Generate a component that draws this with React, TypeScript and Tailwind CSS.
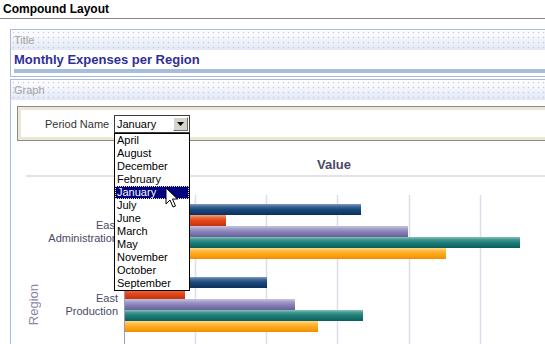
import React from "react";

const months = ["April","August","December","February","January","July","June","March","May","November","October","September"];

const bandCls =
  "h-[20px] flex items-center pl-[3px] text-[11px] text-[#a3a3a3] bg-[radial-gradient(circle,#c6cde3_0.6px,transparent_1.1px),linear-gradient(to_bottom,#ffffff,#e3e8f6)] [background-size:5px_5px,100%_100%]";

type Bar = { end: number; grad: string };
const groups: { y: number; bars: Bar[] }[] = [
  { y: 9, bars: [
    { end: 237, grad: "gNavy" },
    { end: 102, grad: "gRed" },
    { end: 284, grad: "gPurple" },
    { end: 396, grad: "gTeal" },
    { end: 322, grad: "gOrange" },
  ]},
  { y: 82, bars: [
    { end: 143, grad: "gNavy" },
    { end: 61, grad: "gRed" },
    { end: 171, grad: "gPurple" },
    { end: 239, grad: "gTeal" },
    { end: 194, grad: "gOrange" },
  ]},
];

const grads: Record<string, string[]> = {
  gNavy: ["#7f9cc0", "#3a6494", "#1b497b", "#123d6c", "#0c2f5a"],
  gRed: ["#f7a07e", "#ec6a3e", "#e2481a", "#d63e10", "#bf340a"],
  gPurple: ["#c8c4e2", "#a39ecb", "#8a84ba", "#7872aa", "#665f98"],
  gTeal: ["#86c2ba", "#3f958e", "#1f7f79", "#146f6a", "#0b5e5a"],
  gOrange: ["#ffdb8e", "#ffbd45", "#ffa920", "#f99d10", "#ec9000"],
};

function Plot() {
  const gx = [71.5, 142.5, 213.5, 285.5, 356.5, 427.5];
  return (
    <svg width="480" height="219" className="block">
      <defs>
        {Object.entries(grads).map(([id, c]) => (
          <linearGradient key={id} id={id} x1="0" y1="0" x2="0" y2="1">
            <stop offset="0" stopColor={c[0]} />
            <stop offset="0.25" stopColor={c[1]} />
            <stop offset="0.5" stopColor={c[2]} />
            <stop offset="0.75" stopColor={c[3]} />
            <stop offset="1" stopColor={c[4]} />
          </linearGradient>
        ))}
      </defs>
      {gx.map((x) => (
        <line key={x} x1={x} y1={0} x2={x} y2={219} stroke="#dcdcea" strokeWidth={1.5} />
      ))}
      <line x1={0.5} y1={0} x2={0.5} y2={219} stroke="#9a9abb" strokeWidth={1} />
      {groups.map((g, gi) =>
        g.bars.map((b, bi) => (
          <rect key={gi + "-" + bi} x={1} y={g.y + bi * 11} width={b.end - 1} height={11} fill={`url(#${b.grad})`} />
        ))
      )}
    </svg>
  );
}

function Cursor() {
  return (
    <svg width="14" height="22" viewBox="0 0 14 22" className="block">
      <path d="M1 1 L1 17 L5 13 L8 20 L10.5 19 L7.5 12 L12.5 12 Z" fill="#ffffff" stroke="#000000" strokeWidth="1" strokeLinejoin="miter" />
    </svg>
  );
}

export default function App() {
  return (
    <div className="relative w-[545px] h-[344px] overflow-hidden bg-white font-['Liberation_Sans',Arial,sans-serif] text-black">
      {/* Header */}
      <div className="h-[19px] pl-[3px] pt-[1px] border-b border-[#858585] text-[12px] font-bold leading-[16px]">
        Compound Layout
      </div>

      <div className="pl-[10px] pt-[10px]">
        {/* Title panel */}
        <div className="border-l border-t border-b border-[#a9bcdc]">
          <div className={bandCls}>Title</div>
          <div className="h-[19px] pl-[3px] flex items-center text-[13px] font-bold text-[#2e2e96] leading-[15px]">
            Monthly Expenses per Region
          </div>
          <div className="ml-[3px] h-[4px] bg-[#a7bddf]" />
          <div className="h-[3px]" />
        </div>

        {/* Graph panel */}
        <div className="mt-[2px] border-l border-t border-[#a9bcdc] h-[300px]">
          <div className={bandCls}>Graph</div>
          <div className="pl-[6px] pt-[6px]">
            <div className="border border-[#8a8a8a] border-r-0">
              <div className="border-[3px] border-r-0 border-[#ece8d5] h-[33px] flex items-start pt-[5px] pl-[24px] text-[11px] text-[#333333]">
                <span className="w-[69px] leading-[18px]">Period Name</span>
                <div className="relative z-10">
                  <div className="w-[76px] h-[18px] border border-[#3c3c3c] bg-white flex items-center">
                    <span className="flex-1 pl-[2px] leading-[16px] text-black">January</span>
                    <div className="w-[15px] h-[14px] mr-[1px] bg-[#d6d3ca] border border-t-white border-l-white border-b-[#6e6e6e] border-r-[#6e6e6e] flex items-center justify-center">
                      <svg width="7" height="4" viewBox="0 0 7 4"><path d="M0 0 H7 L3.5 4 Z" fill="#000" /></svg>
                    </div>
                  </div>
                  <div className="absolute left-0 top-full w-[76px] border border-black bg-white">
                    {months.map((m) => (
                      <div
                        key={m}
                        className={
                          m === "January"
                            ? "h-[13px] leading-[13px] pl-[2px] bg-[#000080] text-white outline outline-1 outline-dotted outline-[#e8e8a0] -outline-offset-1"
                            : "h-[13px] leading-[13px] pl-[2px] text-black"
                        }
                      >
                        {m}
                      </div>
                    ))}
                  </div>
                </div>
              </div>
            </div>
          </div>

          {/* Chart */}
          <div className="pl-[15px]">
            <div className="w-[616px]">
              <div className="h-[36px] border-b-2 border-[#e2e2ee] flex items-end justify-center pb-[3px]">
                <span className="text-[13px] font-bold text-[#4a4a66] leading-[15px]">Value</span>
              </div>
              <div className="pt-[18px] flex">
                <div className="w-[16px] h-[219px] flex items-center justify-center">
                  <span className="[writing-mode:vertical-rl] rotate-180 text-[13px] text-[#8886ab] leading-[14px]">Region</span>
                </div>
                <div className="w-[76px] flex flex-col text-[11px] text-[#4a4a66] leading-[13px]">
                  <div className="h-[73px] flex flex-col items-end justify-center text-right">
                    <span>East</span>
                    <span>Administration</span>
                  </div>
                  <div className="h-[73px] flex flex-col items-end justify-center text-right">
                    <span>East</span>
                    <span>Production</span>
                  </div>
                  <div className="h-[73px]" />
                </div>
                <div className="ml-[6px]">
                  <Plot />
                </div>
              </div>
            </div>
          </div>
        </div>
      </div>

      <div className="absolute left-[165px] top-[187px] z-20">
        <Cursor />
      </div>
    </div>
  );
}
